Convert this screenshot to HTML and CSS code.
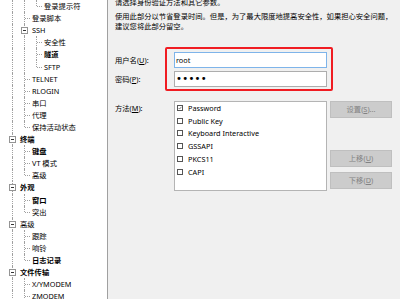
FILE: index.html
```html
<!DOCTYPE html>
<html lang="zh-CN">
<head>
    <meta charset="UTF-8">
    <meta name="viewport" content="width=device-width, initial-scale=1.0">
    <title>会话选项 - 身份验证</title>
    <link rel="stylesheet" href="styles.css">
</head>
<body>
    <div class="options">
        <!-- 左侧类别树 -->
        <div class="tree">
            <div class="node"><span class="g"></span><span class="g"></span><span class="g end"></span><span class="label">登录提示符</span></div>
            <div class="node"><span class="g"></span><span class="g tee"></span><span class="label">登录脚本</span></div>
            <div class="node"><span class="g"></span><span class="g box"></span><span class="label">SSH</span></div>
            <div class="node"><span class="g"></span><span class="g"></span><span class="g tee"></span><span class="label">安全性</span></div>
            <div class="node"><span class="g"></span><span class="g"></span><span class="g tee"></span><span class="label bold">隧道</span></div>
            <div class="node"><span class="g"></span><span class="g"></span><span class="g end"></span><span class="label">SFTP</span></div>
            <div class="node"><span class="g"></span><span class="g tee"></span><span class="label">TELNET</span></div>
            <div class="node"><span class="g"></span><span class="g tee"></span><span class="label">RLOGIN</span></div>
            <div class="node"><span class="g"></span><span class="g tee"></span><span class="label">串口</span></div>
            <div class="node"><span class="g"></span><span class="g tee"></span><span class="label">代理</span></div>
            <div class="node"><span class="g"></span><span class="g end"></span><span class="label">保持活动状态</span></div>
            <div class="node"><span class="g box"></span><span class="label bold">终端</span></div>
            <div class="node"><span class="g"></span><span class="g tee"></span><span class="label bold">键盘</span></div>
            <div class="node"><span class="g"></span><span class="g tee"></span><span class="label">VT 模式</span></div>
            <div class="node"><span class="g"></span><span class="g end"></span><span class="label">高级</span></div>
            <div class="node"><span class="g box"></span><span class="label bold">外观</span></div>
            <div class="node"><span class="g"></span><span class="g tee"></span><span class="label bold">窗口</span></div>
            <div class="node"><span class="g"></span><span class="g end"></span><span class="label">突出</span></div>
            <div class="node"><span class="g box"></span><span class="label">高级</span></div>
            <div class="node"><span class="g"></span><span class="g tee"></span><span class="label">跟踪</span></div>
            <div class="node"><span class="g"></span><span class="g tee"></span><span class="label">响铃</span></div>
            <div class="node"><span class="g"></span><span class="g end"></span><span class="label bold">日志记录</span></div>
            <div class="node"><span class="g box"></span><span class="label bold">文件传输</span></div>
            <div class="node"><span class="g"></span><span class="g tee"></span><span class="label">X/YMODEM</span></div>
            <div class="node"><span class="g"></span><span class="g tee"></span><span class="label">ZMODEM</span></div>
        </div>

        <!-- 右侧设置面板 -->
        <div class="panel">
            <p class="intro">请选择身份验证方法和其它参数。</p>
            <p class="hint">使用此部分以节省登录时间。但是，为了最大限度地提高安全性，如果担心安全问题，<br>建议您将此部分留空。</p>

            <div class="logon">
                <label class="caption">用户名(<u>U</u>):</label>
                <input class="field focus" type="text" value="root" readonly>
                <label class="caption">密码(<u>P</u>):</label>
                <input class="field pass" type="password" value="12345" readonly>
            </div>

            <div class="methods">
                <label class="caption">方法(<u>M</u>):</label>
                <div class="list">
                    <div class="item"><span class="check"><svg viewBox="0 0 6 6"><path d="M0.8 3 L2.4 4.6 L5.2 1.2" /></svg></span>Password</div>
                    <div class="item"><span class="check"></span>Public Key</div>
                    <div class="item"><span class="check"></span>Keyboard Interactive</div>
                    <div class="item"><span class="check"></span>GSSAPI</div>
                    <div class="item"><span class="check"></span>PKCS11</div>
                    <div class="item"><span class="check"></span>CAPI</div>
                </div>
                <div class="actions">
                    <button disabled>设置(<u>S</u>)...</button>
                    <button class="move" disabled>上移(<u>U</u>)</button>
                    <button disabled>下移(<u>D</u>)</button>
                </div>
            </div>
        </div>
    </div>
</body>
</html>
```

FILE: styles.css
```css
body {
    margin: 0;
    font-family: "Noto Sans", "Noto Sans CJK SC", sans-serif;
    font-size: 7.3px;
    color: #000;
    background: #f0f0f0;
    overflow: hidden;
}

.options {
    display: flex;
    height: 299px;
}

/* 类别树 */
.tree {
    width: 101px;
    padding-left: 6px;
    background: #fff;
    border-right: 1px solid #a0a0a0;
    overflow: hidden;
}

.node {
    display: flex;
    align-items: center;
    height: 12.1px;
    white-space: nowrap;
}

.g {
    position: relative;
    flex: none;
    width: 12px;
    align-self: stretch;
}

.g::before {
    content: '';
    position: absolute;
    left: 6px;
    top: 0;
    bottom: 0;
    border-left: 1px dotted #a0a0a0;
}

.g.end::before {
    bottom: 50%;
}

.g.tee::after,
.g.end::after {
    content: '';
    position: absolute;
    left: 7px;
    top: 50%;
    width: 5px;
    border-top: 1px dotted #a0a0a0;
}

.g.box::after {
    content: '';
    position: absolute;
    left: 3px;
    top: calc(50% - 3px);
    width: 5px;
    height: 5px;
    border: 1px solid #949494;
    background: #fff linear-gradient(#333, #333) center / 3px 1px no-repeat;
}

.label {
    margin-left: 2px;
}

.bold {
    font-weight: bold;
}

/* 设置面板 */
.panel {
    flex: 1;
    padding-left: 7px;
}

.intro {
    margin: -3.5px 0 4px;
    line-height: 10px;
}

.hint {
    margin: 0;
    line-height: 10px;
}

.logon {
    position: relative;
    display: grid;
    grid-template-columns: 59px 153px;
    row-gap: 3px;
    width: 212px;
    margin-top: 21px;
}

/* 红色标注框 */
.logon::after {
    content: '';
    position: absolute;
    left: 50px;
    top: -4.5px;
    right: -6px;
    bottom: -4px;
    border: 2px solid #f01c22;
    border-radius: 2px;
}

.caption {
    line-height: 16px;
}

.field {
    box-sizing: border-box;
    width: 153px;
    height: 16px;
    margin: 0;
    padding: 0 1px;
    border: 1px solid #adadad;
    background: #fff;
    font: inherit;
    color: #000;
    outline: none;
}

.field.focus {
    border-color: #7eb4ea;
}

.field.pass {
    font-family: "DejaVu Sans", sans-serif;
    font-size: 10px;
    letter-spacing: 0.3px;
}

.methods {
    display: grid;
    grid-template-columns: 59px 153px 65px;
    margin-top: 14px;
}

.methods .caption {
    line-height: 14px;
}

.list {
    box-sizing: border-box;
    height: 90px;
    border: 1px solid #b4b4b4;
    background: #fff;
    padding-left: 2px;
}

.item {
    display: flex;
    align-items: center;
    height: 12.8px;
    white-space: nowrap;
}

.check {
    box-sizing: border-box;
    width: 6px;
    height: 6px;
    margin-right: 5px;
    border: 1px solid #555;
    background: #fff;
    display: flex;
}

.check svg {
    width: 100%;
    height: 100%;
    overflow: visible;
}

.check path {
    fill: none;
    stroke: #333;
    stroke-width: 0.9;
}

.actions {
    display: flex;
    flex-direction: column;
    padding: 0 0 2px 3px;
}

button {
    width: 62px;
    height: 17px;
    padding: 0;
    border: 1px solid #bfbfbf;
    background: #cccccc;
    color: #838383;
    font: inherit;
}

.move {
    margin-top: auto;
    margin-bottom: 5px;
}
```
